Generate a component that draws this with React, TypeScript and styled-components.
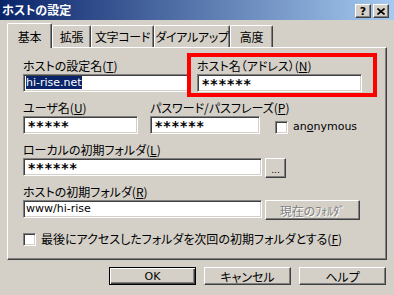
import styled, { createGlobalStyle } from "styled-components";

const jp = `"Noto Sans CJK JP", "Noto Sans CJK SC", sans-serif`;
const latin = `"DejaVu Sans", "Noto Sans CJK JP", sans-serif`;

const GlobalStyle = createGlobalStyle`
  html, body {
    margin: 0;
    padding: 0;
    background: #d4d0c8;
  }
  body {
    font-family: ${jp};
    font-feature-settings: "palt";
  }
  * { box-sizing: border-box; }
`;

const Window = styled.div`
  width: 394px;
  height: 295px;
  background: #d4d0c8;
  display: flex;
  flex-direction: column;
  overflow: hidden;
`;

const TitleBar = styled.div`
  height: 20px;
  display: flex;
  align-items: center;
  justify-content: space-between;
  padding: 0 5px 0 2px;
  background: linear-gradient(to right, #0a246a, #a6caf0);
`;

const Title = styled.div`
  color: #fff;
  font-weight: bold;
  font-size: 12px;
  line-height: 14px;
`;

const TitleButtons = styled.div`
  display: flex;
  gap: 2px;
  margin-top: 2px;
`;

const TitleButton = styled.div`
  width: 16px;
  height: 14px;
  background: #d4d0c8;
  border: 1px solid;
  border-color: #fff #404040 #404040 #fff;
  box-shadow: inset -1px -1px #808080;
  display: flex;
  align-items: center;
  justify-content: center;
  font-family: ${latin};
  font-weight: bold;
  font-size: 11px;
  color: #000;
`;

const TabStrip = styled.div`
  height: 27px;
  display: flex;
  align-items: flex-end;
  padding: 3px 0 0 7px;
`;

const Tab = styled.div<{ $active?: boolean; $w: number }>`
  position: relative;
  z-index: ${(p) => (p.$active ? 2 : 1)};
  width: ${(p) => p.$w}px;
  height: ${(p) => (p.$active ? 25 : 22)}px;
  margin-bottom: ${(p) => (p.$active ? -1 : 0)}px;
  background: #d4d0c8;
  border-top: 1px solid #fff;
  border-left: 1px solid #fff;
  border-right: 1px solid #404040;
  box-shadow: inset -1px 0 #808080;
  border-radius: 2px 2px 0 0;
  display: flex;
  align-items: center;
  justify-content: center;
  padding-top: ${(p) => (p.$active ? 1 : 0)}px;
  font-size: 12px;
  letter-spacing: -0.3px;
  white-space: nowrap;
  color: #000;
`;

const Panel = styled.div`
  margin: 0 7px;
  height: 213px;
  border-top: 1px solid #fff;
  border-left: 1px solid #fff;
  border-right: 1px solid #404040;
  border-bottom: 1px solid #404040;
  box-shadow: inset -1px -1px #808080;
  padding: 5px 0 0 15px;
  display: flex;
  flex-direction: column;
`;

const Row = styled.div<{ $mt?: number }>`
  display: flex;
  align-items: flex-start;
  margin-top: ${(p) => p.$mt ?? 0}px;
`;

const Field = styled.div<{ $w: number; $mt?: number; $ml?: number }>`
  width: ${(p) => p.$w}px;
  margin-top: ${(p) => p.$mt ?? 0}px;
  margin-left: ${(p) => p.$ml ?? 0}px;
  display: flex;
  flex-direction: column;
  gap: 1px;
`;

const Label = styled.div`
  font-size: 12px;
  line-height: 14px;
  height: 14px;
  color: #000;
  white-space: nowrap;
`;

const TextBox = styled.div<{ $w?: number; $mask?: boolean }>`
  width: ${(p) => (p.$w ? `${p.$w}px` : "100%")};
  height: 18px;
  background: #fff;
  border: 1px solid;
  border-color: #808080 #fff #fff #808080;
  box-shadow: inset 1px 1px #404040, inset -1px -1px #d4d0c8;
  padding: ${(p) => (p.$mask ? "3px 0 0 4px" : "0 0 0 2px")};
  font-family: ${latin};
  font-size: ${(p) => (p.$mask ? 14 : 11)}px;
  font-weight: ${(p) => (p.$mask ? "bold" : "normal")};
  letter-spacing: ${(p) => (p.$mask ? 1 : 0)}px;
  line-height: ${(p) => (p.$mask ? 13 : 16)}px;
  color: #000;
  white-space: nowrap;
`;

const Selected = styled.span`
  background: #0a246a;
  color: #fff;
`;

const Highlight = styled.div`
  position: relative;
  z-index: 1;
  margin-left: -2px;
  width: 190px;
  border: 4px solid #ff0000;
  padding: 2px 11px 1px 6px;
  display: flex;
  flex-direction: column;
  gap: 1px;
`;

const CheckGroup = styled.label<{ $ml?: number; $mt?: number }>`
  display: flex;
  align-items: center;
  gap: 5px;
  margin-left: ${(p) => p.$ml ?? 0}px;
  margin-top: ${(p) => p.$mt ?? 0}px;
  font-size: 12px;
  line-height: 14px;
  color: #000;
  white-space: nowrap;
`;

const CheckBox = styled.span`
  width: 13px;
  height: 13px;
  background: #fff;
  border: 1px solid;
  border-color: #808080 #fff #fff #808080;
  box-shadow: inset 1px 1px #404040, inset -1px -1px #d4d0c8;
  flex-shrink: 0;
`;

const LatinText = styled.span`
  font-family: ${latin};
  font-size: 11px;
`;

const InputLine = styled.div`
  display: flex;
  align-items: flex-start;
  gap: 3px;
`;

const Button = styled.div<{ $w: number; $h?: number; $default?: boolean; $disabled?: boolean }>`
  width: ${(p) => p.$w}px;
  height: ${(p) => p.$h ?? 20}px;
  background: #d4d0c8;
  border: 1px solid;
  border-color: ${(p) => (p.$default ? "#000" : "#fff #404040 #404040 #fff")};
  box-shadow: ${(p) =>
    p.$default
      ? "inset 1px 1px #fff, inset -1px -1px #404040, inset -2px -2px #808080"
      : "inset -1px -1px #808080"};
  display: flex;
  align-items: center;
  justify-content: center;
  font-size: 12px;
  color: ${(p) => (p.$disabled ? "#808080" : "#000")};
  text-shadow: ${(p) => (p.$disabled ? "1px 1px 0 #fff" : "none")};
  white-space: nowrap;
`;

const Dots = styled.span`
  font-family: ${latin};
  font-size: 9px;
  margin-top: 4px;
`;

const ButtonRow = styled.div`
  display: flex;
  justify-content: flex-end;
  gap: 8px;
  padding: 7px 8px 0 0;
`;

const tabs = [
  { label: "基本", w: 45, active: true },
  { label: "拡張", w: 39 },
  { label: "文字コード", w: 63 },
  { label: "ダイアルアップ", w: 76 },
  { label: "高度", w: 43 },
];

export default function App() {
  return (
    <Window>
      <GlobalStyle />
      <TitleBar>
        <Title>ホストの設定</Title>
        <TitleButtons>
          <TitleButton>?</TitleButton>
          <TitleButton>
            <svg width="8" height="7" viewBox="0 0 8 7">
              <path d="M0.5 0.5 L7.5 6.5 M7.5 0.5 L0.5 6.5" stroke="#000" strokeWidth="1.6" />
            </svg>
          </TitleButton>
        </TitleButtons>
      </TitleBar>

      <TabStrip>
        {tabs.map((t) => (
          <Tab key={t.label} $w={t.w} $active={t.active}>
            {t.label}
          </Tab>
        ))}
      </TabStrip>

      <Panel>
        <Row>
          <Field $w={166} $mt={6}>
            <Label>
              ホストの設定名(<u>T</u>)
            </Label>
            <TextBox>
              <Selected>hi-rise.net</Selected>
            </TextBox>
          </Field>
          <Highlight>
            <Label>
              ホスト名（アドレス）(<u>N</u>)
            </Label>
            <TextBox $mask>******</TextBox>
          </Highlight>
        </Row>

        <Row $mt={4}>
          <Field $w={115}>
            <Label>
              ユーザ名(<u>U</u>)
            </Label>
            <TextBox $mask>*****</TextBox>
          </Field>
          <Field $w={110} $ml={12}>
            <Label>
              パスワード/パスフレーズ(<u>P</u>)
            </Label>
            <TextBox $mask>******</TextBox>
          </Field>
          <CheckGroup $ml={15} $mt={19}>
            <CheckBox />
            <LatinText>
              an<u>o</u>nymous
            </LatinText>
          </CheckGroup>
        </Row>

        <Row $mt={9}>
          <Field $w={342}>
            <Label>
              ローカルの初期フォルダ(<u>L</u>)
            </Label>
            <InputLine>
              <TextBox $w={239} $mask>
                ******
              </TextBox>
              <Button $w={21}>
                <Dots>...</Dots>
              </Button>
            </InputLine>
          </Field>
        </Row>

        <Row $mt={7}>
          <Field $w={342}>
            <Label>
              ホストの初期フォルダ(<u>R</u>)
            </Label>
            <InputLine>
              <TextBox $w={239}>www/hi-rise</TextBox>
              <Button $w={95} $disabled>
                現在のﾌｫﾙﾀﾞ
              </Button>
            </InputLine>
          </Field>
        </Row>

        <CheckGroup $mt={12}>
          <CheckBox />
          <span>
            最後にアクセスしたフォルダを次回の初期フォルダとする(<u>F</u>)
          </span>
        </CheckGroup>
      </Panel>

      <ButtonRow>
        <Button $w={87} $h={18} $default>
          <LatinText>OK</LatinText>
        </Button>
        <Button $w={87} $h={18}>
          キャンセル
        </Button>
        <Button $w={87} $h={18}>
          ヘルプ
        </Button>
      </ButtonRow>
    </Window>
  );
}
